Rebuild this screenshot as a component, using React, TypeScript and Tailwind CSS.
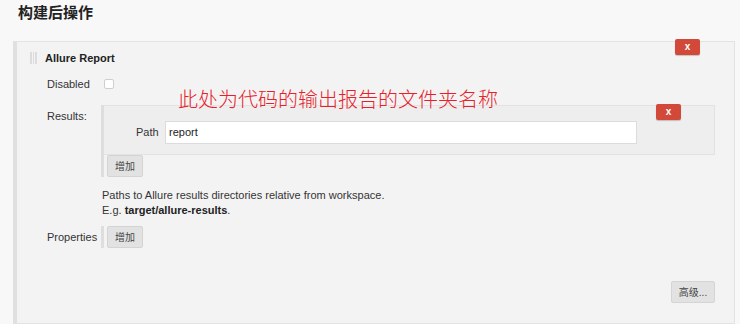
import React from "react";

const XBtn = ({ cls }: { cls: string }) => (
  <div
    className={`absolute flex h-[16px] w-[25px] items-center justify-center rounded-[2px] bg-[#d24939] text-[10px] font-bold leading-none text-white shadow-[0_1px_1px_rgba(0,0,0,0.2)] ${cls}`}
  >
    x
  </div>
);

const AddBtn = () => (
  <div className="flex h-[22px] w-[36px] items-center justify-center rounded-[2px] border border-[#d4d4d4] bg-[#e2e2e2] text-[10px] text-[#444]">
    增加
  </div>
);

export default function App() {
  return (
    <div
      className="h-[324px] w-[740px] overflow-hidden bg-[#f8f8f8] text-[11px] text-[#333]"
      style={{ fontFamily: '"Liberation Sans", Arial, "Noto Sans CJK SC", sans-serif' }}
    >
      <div className="h-[41px] pl-[18px] pt-[3px] text-[15px] font-bold leading-[20px] text-[#222]">
        构建后操作
      </div>
      <div className="relative ml-[13px] h-[283px] w-[722px] border border-l-[4px] border-[#e3e3e3] border-l-[#e0e0e0] bg-[#f3f3f3]">
        <XBtn cls="right-[34px] top-[-3px]" />

        {/* header */}
        <div className="flex h-[31px] items-center pl-[13px] pt-[1px]">
          <div className="flex h-[12px] w-[7px] gap-[1px]">
            <div className="h-full w-[2px] bg-[#dcdcdc]" />
            <div className="h-full w-[2px] bg-[#dcdcdc]" />
            <div className="h-full w-[2px] bg-[#dcdcdc]" />
          </div>
          <div className="ml-[8px] font-bold text-[#222]">Allure Report</div>
        </div>

        {/* Disabled */}
        <div className="flex h-[22px] items-center pl-[30px]">
          <div className="w-[57px]">Disabled</div>
          <div className="h-[10px] w-[10px] rounded-[2px] border border-[#cfcfcf] bg-white" />
        </div>

        {/* Results */}
        <div className="mt-[10px] flex pl-[30px]">
          <div className="w-[54px] pt-[3px]">Results:</div>
          <div className="flex">
            <div className="w-[3px] bg-[#dedede]" />
            <div className="flex flex-col">
              <div className="relative flex h-[50px] w-[611px] items-center border border-l-0 border-[#e2e2e2] bg-[#eeeeee] pl-[32px] pt-[4px]">
                <XBtn cls="right-[33px] top-[-2px]" />
                <div className="w-[29px]">Path</div>
                <div className="flex h-[23px] w-[472px] items-center border border-[#dcdcdc] bg-white pl-[3px] text-[#222]">
                  report
                </div>
              </div>
              <div className="pl-[3px]">
                <AddBtn />
              </div>
            </div>
          </div>
        </div>

        {/* description */}
        <div className="mt-[11px] pl-[85px] leading-[15px]">
          <div>Paths to Allure results directories relative from workspace.</div>
          <div>
            E.g. <span className="font-bold text-[#222]">target/allure-results</span>.
          </div>
        </div>

        {/* Properties */}
        <div className="mt-[8px] flex items-center pl-[30px]">
          <div className="w-[54px]">Properties</div>
          <div className="h-[22px] w-[3px] bg-[#dedede]" />
          <div className="pl-[3px]">
            <AddBtn />
          </div>
        </div>

        {/* advanced */}
        <div className="mt-[33px] flex justify-end pr-[19px]">
          <div className="flex h-[22px] w-[44px] items-center justify-center rounded-[2px] border border-[#d4d4d4] bg-[#e2e2e2] text-[10px] text-[#444]">
            高级...
          </div>
        </div>

        <div
          className="absolute left-[161px] top-[46px] z-10 text-[20px] leading-[22px] text-[#e8202a]"
          style={{ fontFamily: '"Noto Sans CJK SC", sans-serif', fontWeight: 300 }}
        >
          此处为代码的输出报告的文件夹名称
        </div>
      </div>
    </div>
  );
}
